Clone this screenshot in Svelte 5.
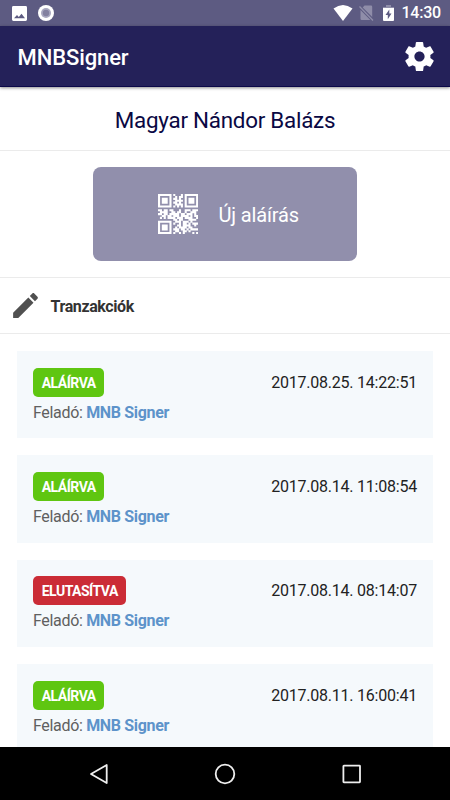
<script lang="ts">
	const transactions = [
		{ signed: true, date: '2017.08.25. 14:22:51' },
		{ signed: true, date: '2017.08.14. 11:08:54' },
		{ signed: false, date: '2017.08.14. 08:14:07' },
		{ signed: true, date: '2017.08.11. 16:00:41' }
	];

	const qr = [
		'#######.#...#.#######',
		'#.....#..#.##.#.....#',
		'#.###.#.##.#..#.###.#',
		'#.###.#..####.#.###.#',
		'#.###.#.##.#..#.###.#',
		'#.....#..####.#.....#',
		'#######.#.#.#.#######',
		'.....................',
		'##.##.##...#..###.###',
		'.####..##.##..#..###.',
		'##.##.#####.##.###.#.',
		'..##.##.###.####.#.##',
		'.#.#.####.###.####..#',
		'........##.##...####.',
		'#######..###.###.#...',
		'#.....#.#..#.##.#.###',
		'#.###.#...##.####..#.',
		'#.###.#..#.####.##...',
		'#.###.#.###.##.#.####',
		'#.....#..##..##.#....',
		'#######.#..#.#....#.#'
	];

	// cells overlap a little so that no seams show between them
	let qrPath = '';
	qr.forEach((row, y) => {
		[...row].forEach((cell, x) => {
			if (cell === '#') qrPath += `M${x} ${y}h1.1v1.1h-1.1z`;
		});
	});
</script>

<div class="screen">
	<div class="status">
		<svg width="15" height="15" viewBox="0 0 15 15">
			<path
				fill="#fff"
				fill-rule="evenodd"
				d="M1.4 0h12.2Q15 0 15 1.4v12.2q0 1.4-1.4 1.4H1.4Q0 15 0 13.6V1.4Q0 0 1.4 0zM2 12.300h11L9.500 7.700 6.800 11 5 9z"
			/>
		</svg>
		<svg width="16" height="16" viewBox="0 0 16 16">
			<circle cx="8" cy="8" r="8" fill="#fff" />
			<circle cx="8" cy="8" r="5" fill="#a9a8c0" />
			<circle cx="8" cy="8" r="3.2" fill="#8381a0" />
		</svg>
		<div class="right">
			<svg width="20" height="16" viewBox="0 0 20 16">
				<path fill="#fff" d="M.5 3.600Q10-3.600 19.500 3.600L10 16z" />
			</svg>
			<svg class="sim" width="15" height="16" viewBox="0 0 15 16">
				<path fill="#8f8da9" d="M5.500.5H12q1.200 0 1.200 1.200v10.400L3.700 2.400zM1.500 5l9.800 10H2.700q-1.200 0-1.200-1.200z" />
				<path stroke="#8f8da9" stroke-width="1.3" d="M.5 1.500l13.500 14" />
			</svg>
			<svg class="battery" width="11" height="16" viewBox="0 0 11 16">
				<path fill="#8f8da9" d="M3 0h5v2h3v2H0V2h3z" />
				<path fill="#fff" d="M0 3h11v12q0 1-1 1H1q-1 0-1-1z" />
				<path fill="#5d5b82" d="M6.300 4.500L2.500 10h2.300v4.200L8.500 8.500H6.300z" />
			</svg>
			<span class="clock">14:30</span>
		</div>
	</div>

	<header>
		<h1>MNBSigner</h1>
		<svg class="gear" width="35" height="35" viewBox="0 0 24 24">
			<path
				fill="#fff"
				d="M19.430 12.980c.04-.32.07-.64.07-.98s-.03-.66-.07-.98l2.110-1.650c.19-.15.24-.42.12-.64l-2-3.460c-.12-.22-.39-.3-.61-.22l-2.490 1c-.52-.4-1.080-.73-1.690-.98l-.38-2.650C14.460 2.180 14.250 2 14 2h-4c-.25 0-.46.18-.49.42l-.38 2.650c-.61.25-1.170.59-1.690.98l-2.490-1c-.23-.09-.49 0-.61.22l-2 3.460c-.13.22-.07.49.12.64l2.110 1.650c-.04.32-.07.65-.07.98s.03.66.07.98l-2.110 1.650c-.19.15-.24.42-.12.64l2 3.460c.12.22.39.3.61.22l2.490-1c.52.4 1.080.73 1.690.98l.38 2.650c.03.24.24.42.49.42h4c.25 0 .46-.18.49-.42l.38-2.650c.61-.25 1.170-.59 1.690-.98l2.490 1c.23.09.49 0 .61-.22l2-3.460c.12-.22.07-.49-.12-.64l-2.110-1.650zM12 15.500c-1.930 0-3.500-1.570-3.500-3.500s1.570-3.500 3.500-3.500 3.500 1.570 3.500 3.500-1.570 3.500-3.500 3.500z"
			/>
		</svg>
	</header>

	<div class="name">Magyar Nándor Balázs</div>

	<div class="action">
		<button>
			<svg width="40" height="40" viewBox="0 0 21 21">
				<path fill="#fff" d={qrPath} />
			</svg>
			<span>Új aláírás</span>
		</button>
	</div>

	<div class="heading">
		<svg width="33" height="33" viewBox="0 0 24 24">
			<path
				fill="#505050"
				d="M3 17.250V21h3.750L17.810 9.940l-3.750-3.750L3 17.250zM20.710 7.040c.39-.39.39-1.020 0-1.410l-2.340-2.340c-.39-.39-1.020-.39-1.410 0l-1.830 1.830 3.750 3.750 1.830-1.830z"
			/>
		</svg>
		<h2>Tranzakciók</h2>
	</div>

	<div class="list">
		{#each transactions as transaction}
			<div class="card">
				<div class="row">
					<span class="badge" class:rejected={!transaction.signed}>
						{transaction.signed ? 'ALÁÍRVA' : 'ELUTASÍTVA'}
					</span>
					<span class="date">{transaction.date}</span>
				</div>
				<div class="sender">Feladó: <b>MNB Signer</b></div>
			</div>
		{/each}
	</div>

	<nav>
		<svg width="20" height="22" viewBox="0 0 20 22">
			<path fill="none" stroke="#eee" stroke-width="1.8" stroke-linejoin="round" d="M17.700 2v18L2 11z" />
		</svg>
		<svg width="22" height="22" viewBox="0 0 22 22">
			<circle cx="11" cy="11" r="9.3" fill="none" stroke="#eee" stroke-width="1.8" />
		</svg>
		<svg width="20" height="20" viewBox="0 0 20 20">
			<rect x="1.4" y="1.7" width="16.6" height="16.6" rx=".5" fill="none" stroke="#eee" stroke-width="1.8" />
		</svg>
	</nav>
</div>

<style>
	:global(body) {
		background: #fff;
	}

	.screen {
		display: flex;
		flex-direction: column;
		width: 450px;
		height: 800px;
		overflow: hidden;
		font-family: Roboto, sans-serif;
		background: #fff;
	}

	svg {
		display: block;
		flex: none;
	}

	.status {
		display: flex;
		flex: none;
		align-items: center;
		height: 26px;
		padding: 0 9px 0 12px;
		gap: 11px;
		background: #5d5b82;
	}

	.right {
		display: flex;
		align-items: center;
		margin-left: auto;
	}

	.sim {
		margin-left: 6px;
	}

	.battery {
		margin-left: 9px;
	}

	.clock {
		margin-left: 7px;
		color: #fff;
		font-size: 16px;
		font-weight: 500;
		letter-spacing: -0.2px;
		line-height: 28px;
	}

	header {
		position: relative;
		display: flex;
		flex: none;
		align-items: center;
		justify-content: space-between;
		box-sizing: border-box;
		height: 61px;
		padding: 0 13px 0 17.5px;
		background: #242159;
		border-bottom: 1px solid #0b0848;
		box-shadow: 0 1px 3px rgba(0, 0, 0, 0.45);
	}

	h1 {
		margin: 3px 0 0;
		color: #fff;
		font-size: 22px;
		font-weight: 500;
		letter-spacing: -0.1px;
	}

	.gear {
		margin-top: 1px;
	}

	.name {
		flex: none;
		box-sizing: border-box;
		height: 64px;
		border-bottom: 1px solid #ebebeb;
		color: #0a0843;
		font-size: 22.4px;
		letter-spacing: -0.25px;
		line-height: 66px;
		text-align: center;
	}

	.action {
		display: flex;
		flex: none;
		justify-content: center;
		box-sizing: border-box;
		height: 127px;
		padding-top: 16px;
		border-bottom: 1px solid #ebebeb;
	}

	button {
		display: flex;
		align-items: center;
		width: 264px;
		height: 94px;
		padding: 0 0 0 65px;
		gap: 20.5px;
		border: 0;
		border-radius: 8px;
		background: #918fac;
		color: #fff;
		font-family: inherit;
		font-size: 20px;
		letter-spacing: -0.15px;
	}

	button span {
		padding-top: 2px;
	}

	.heading {
		display: flex;
		flex: none;
		align-items: center;
		box-sizing: border-box;
		height: 56px;
		padding-left: 8.5px;
		gap: 9px;
		border-bottom: 1px solid #ebebeb;
	}

	h2 {
		margin: 2px 0 0;
		color: #333;
		font-size: 16px;
		font-weight: 700;
		letter-spacing: -0.4px;
	}

	.list {
		flex: 1;
		min-height: 0;
		padding: 17px 17px 0;
		overflow: hidden;
	}

	.card {
		box-sizing: border-box;
		height: 87.4px;
		margin-bottom: 17px;
		padding: 16.5px 16px 0 16px;
		background: #f5f9fc;
	}

	.row {
		display: flex;
		align-items: center;
		justify-content: space-between;
	}

	.badge {
		height: 29px;
		padding: 0 8.2px 0 8.7px;
		border-radius: 5px;
		background: #5fc611;
		color: #fff;
		font-size: 14px;
		font-weight: 700;
		letter-spacing: -0.5px;
		line-height: 30px;
	}

	.rejected {
		background: #cb2c36;
	}

	.date {
		color: #222;
		font-size: 16px;
		letter-spacing: -0.22px;
	}

	.sender {
		margin-top: 6px;
		color: #606060;
		font-size: 16px;
		letter-spacing: -0.33px;
		line-height: 20px;
	}

	b {
		color: #5d93ca;
	}

	nav {
		display: flex;
		flex: none;
		align-items: center;
		justify-content: space-between;
		height: 53px;
		padding: 0 88.5px;
		box-sizing: border-box;
		background: #000;
	}
</style>
